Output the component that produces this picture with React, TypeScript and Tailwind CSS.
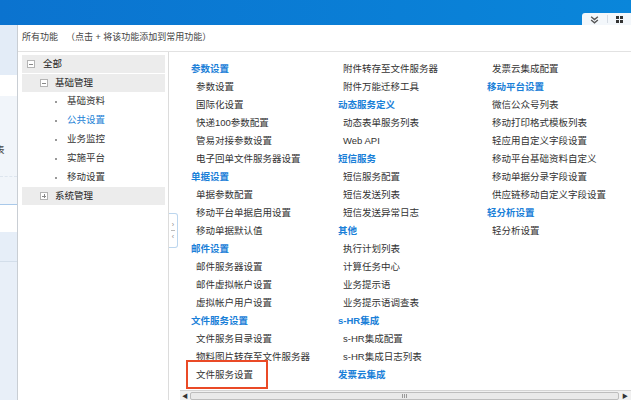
/**
 * 所有功能 - 功能菜单面板
 */

type Entry = { text: string; head?: boolean; mark?: boolean }

const h = (text: string): Entry => ({ text, head: true })
const i = (text: string): Entry => ({ text })

const columns: Entry[][] = [
  [
    h('参数设置'),
    i('参数设置'),
    i('国际化设置'),
    i('快递100参数配置'),
    i('管易对接参数设置'),
    i('电子回单文件服务器设置'),
    h('单据设置'),
    i('单据参数配置'),
    i('移动平台单据启用设置'),
    i('移动单据默认值'),
    h('邮件设置'),
    i('邮件服务器设置'),
    i('邮件虚拟帐户设置'),
    i('虚拟帐户用户设置'),
    h('文件服务设置'),
    i('文件服务目录设置'),
    i('物料图片转存至文件服务器'),
    { text: '文件服务设置', mark: true },
  ],
  [
    i('附件转存至文件服务器'),
    i('附件万能迁移工具'),
    h('动态服务定义'),
    i('动态表单服务列表'),
    i('Web API'),
    h('短信服务'),
    i('短信服务配置'),
    i('短信发送列表'),
    i('短信发送异常日志'),
    h('其他'),
    i('执行计划列表'),
    i('计算任务中心'),
    i('业务提示语'),
    i('业务提示语调查表'),
    h('s-HR集成'),
    i('s-HR集成配置'),
    i('s-HR集成日志列表'),
    h('发票云集成'),
  ],
  [
    i('发票云集成配置'),
    h('移动平台设置'),
    i('微信公众号列表'),
    i('移动打印格式模板列表'),
    i('轻应用自定义字段设置'),
    i('移动平台基础资料自定义'),
    i('移动单据分录字段设置'),
    i('供应链移动自定义字段设置'),
    h('轻分析设置'),
    i('轻分析设置'),
  ],
]

const leaves = ['基础资料', '公共设置', '业务监控', '实施平台', '移动设置']

function BoxIcon({ open }: { open: boolean }) {
  return (
    <span className="relative inline-block w-[8px] h-[8px] border border-[#b4b4b4] bg-white shrink-0">
      <span className="absolute left-[1px] right-[1px] top-[2.5px] h-px bg-[#888]" />
      {!open && <span className="absolute top-[1px] bottom-[1px] left-[2.5px] w-px bg-[#888]" />}
    </span>
  )
}

export default function App() {
  return (
    <div
      className="w-[631px] h-[400px] overflow-hidden flex flex-col bg-white text-[#333]"
      style={{ fontFamily: '"Liberation Sans", "Noto Sans CJK SC", sans-serif' }}
    >
      {/* 顶部蓝条 */}
      <div className="h-[25px] shrink-0 bg-gradient-to-r from-[#0b73cf] to-[#0a86da] flex items-end justify-end">
        <div className="w-[49px] h-[12px] bg-[#f3f7fb] rounded-tl-[3px] flex items-center">
          <div className="w-[25px] flex justify-center">
            <svg width="9" height="9" viewBox="0 0 8 8" fill="none" stroke="#555" strokeWidth="1.2">
              <path d="M1 1.5 4 4 7 1.5M1 4.5 4 7 7 4.5" />
            </svg>
          </div>
          <div className="w-px h-[8px] bg-[#d6dce4]" />
          <div className="flex-1 flex justify-center">
            <div className="grid grid-cols-2 gap-[1px]">
              <span className="w-[3px] h-[3px] bg-[#333]" />
              <span className="w-[3px] h-[3px] bg-[#333]" />
              <span className="w-[3px] h-[3px] bg-[#333]" />
              <span className="w-[3px] h-[3px] bg-[#333]" />
            </div>
          </div>
        </div>
      </div>

      <div className="flex flex-1 min-h-0">
        {/* 左侧背景条 */}
        <div className="w-[17px] shrink-0 flex flex-col text-[9.5px] overflow-hidden">
          <div className="h-[50px] bg-[#e3ecf7]" />
          <div className="h-[21px] bg-white" />
          <div className="h-[81px] bg-[#f1f5fa] border-b border-dashed border-[#dde5ee] flex items-end pb-[19px]">
            <span className="ml-[-5px] text-[#444]">表</span>
          </div>
          <div className="h-[28px] bg-[#f1f5fa] border-b border-[#a9c9ea]" />
          <div className="h-[27px] bg-white" />
          <div className="h-[30px] bg-[#e6eef8] border-b border-[#d3deea]" />
          <div className="flex-1 bg-[#e8eff8]" />
        </div>

        {/* 主面板 */}
        <div className="flex-1 flex flex-col border-l border-[#c9ced4] min-w-0">
          <div className="h-[27px] shrink-0 border-b border-[#e2e2e2] flex items-center pl-[4px] text-[9px] text-[#444]">
            <span>所有功能</span>
            <span className="ml-[8px]">（点击 + 将该功能添加到常用功能）</span>
          </div>

          <div className="flex flex-1 min-h-0">
            {/* 树 */}
            <div className="w-[151px] shrink-0 pl-[4px] pr-[3px] pt-[3px] border-r border-[#dcdcdc] text-[9.5px]">
              <div className="h-[18px] bg-[#ececec] flex items-center pl-[5px] gap-[8px]">
                <BoxIcon open />
                <span className="text-[#222]">全部</span>
              </div>
              <div className="h-[18px] mt-px bg-[#ececec] flex items-center pl-[18px] gap-[7px]">
                <BoxIcon open />
                <span className="text-[#222]">基础管理</span>
              </div>
              {leaves.map((t) => (
                <div key={t} className="h-[19px] flex items-center pl-[33px]">
                  <span className="w-[2px] h-[2px] bg-[#999]" />
                  <span className={t === '公共设置' ? 'ml-[10px] text-[#1b7fd6]' : 'ml-[10px] text-[#333]'}>{t}</span>
                </div>
              ))}
              <div className="h-[18px] bg-[#ececec] flex items-center pl-[18px] gap-[7px]">
                <BoxIcon open={false} />
                <span className="text-[#222]">系统管理</span>
              </div>
            </div>

            {/* 折叠把手 */}
            <div className="w-[11px] shrink-0">
              <div className="mt-[161px] w-[9px] h-[35px] border border-l-0 border-[#bcd6ee] rounded-r-[3px] flex flex-col items-center justify-center gap-[1px] text-[7px] leading-[9px] text-[#888]">
                <span>›</span>
                <span className="w-[4px] h-px bg-[#bbb]" />
                <span>‹</span>
              </div>
            </div>

            {/* 功能列表 */}
            <div className="flex-1 flex flex-col min-w-0">
              <div className="flex-1 pl-[11px] pt-[8px] grid grid-cols-[147px_149px_1fr] text-[9.5px]">
                {columns.map((col, ci) => (
                  <div key={ci} className="flex flex-col">
                    {col.map((e, ri) => (
                      <div
                        key={ri}
                        className={
                          e.head
                            ? 'h-[18px] flex items-center font-bold text-[#1a80d8]'
                            : 'h-[18px] flex items-center pl-[5px] text-[#333]'
                        }
                      >
                        {e.mark ? (
                          <span className="relative">
                            {e.text}
                            <span className="absolute left-[-10px] right-[-15px] top-[-8px] bottom-[-7px] border-2 border-[#ea4a26]" />
                          </span>
                        ) : (
                          e.text
                        )}
                      </div>
                    ))}
                  </div>
                ))}
              </div>

              {/* 横向滚动条 */}
              <div className="h-[10px] shrink-0 bg-[#f0f0f0] border-t border-[#d4d4d4] flex items-center">
                <span className="w-[10px] text-center text-[6px] leading-none text-[#333]">◀</span>
                <div className="flex-1 h-[8px] bg-[#e9e9e9] border border-[#bdbdbd] rounded-[2px] flex items-center justify-center">
                  <div className="flex gap-[1px]">
                    <span className="w-px h-[4px] bg-[#999]" />
                    <span className="w-px h-[4px] bg-[#999]" />
                    <span className="w-px h-[4px] bg-[#999]" />
                  </div>
                </div>
                <span className="w-[12px] text-center text-[6px] leading-none text-[#333]">▶</span>
              </div>
            </div>
          </div>
        </div>
      </div>
    </div>
  )
}
